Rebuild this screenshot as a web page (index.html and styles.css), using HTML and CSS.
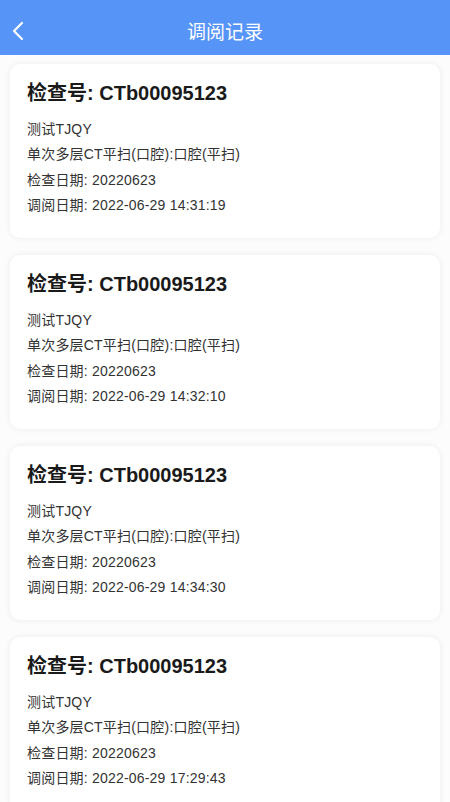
FILE: index.html
```html
<!DOCTYPE html>
<html lang="zh">
<head>
<meta charset="utf-8">
<link rel="stylesheet" href="styles.css">
</head>
<body>
<header class="nav">
  <svg class="back" width="14" height="20" viewBox="0 0 14 20"><path d="M11 2 L3 10 L11 18" fill="none" stroke="#fff" stroke-width="2.2" stroke-linecap="round" stroke-linejoin="round"/></svg>
  <div class="nav-title">调阅记录</div>
</header>
<main class="list">
  <section class="card">
    <h2 class="card-title">检查号: CTb00095123</h2>
    <p class="line">测试TJQY</p>
    <p class="line">单次多层CT平扫(口腔):口腔(平扫)</p>
    <p class="line">检查日期: 20220623</p>
    <p class="line">调阅日期: 2022-06-29 14:31:19</p>
  </section>
  <section class="card">
    <h2 class="card-title">检查号: CTb00095123</h2>
    <p class="line">测试TJQY</p>
    <p class="line">单次多层CT平扫(口腔):口腔(平扫)</p>
    <p class="line">检查日期: 20220623</p>
    <p class="line">调阅日期: 2022-06-29 14:32:10</p>
  </section>
  <section class="card">
    <h2 class="card-title">检查号: CTb00095123</h2>
    <p class="line">测试TJQY</p>
    <p class="line">单次多层CT平扫(口腔):口腔(平扫)</p>
    <p class="line">检查日期: 20220623</p>
    <p class="line">调阅日期: 2022-06-29 14:34:30</p>
  </section>
  <section class="card">
    <h2 class="card-title">检查号: CTb00095123</h2>
    <p class="line">测试TJQY</p>
    <p class="line">单次多层CT平扫(口腔):口腔(平扫)</p>
    <p class="line">检查日期: 20220623</p>
    <p class="line">调阅日期: 2022-06-29 17:29:43</p>
  </section>
</main>
</body>
</html>
```
FILE: styles.css
```css
html, body {
  margin: 0;
  padding: 0;
  background: #fcfcfd;
  font-family: "Liberation Sans", "Noto Sans CJK SC", sans-serif;
  overflow: hidden;
}
.nav {
  height: 55px;
  background: #5794f8;
  display: flex;
  align-items: center;
  justify-content: center;
  position: relative;
}
.back {
  position: absolute;
  left: 11px;
  top: 21px;
}
.nav-title {
  color: #fff;
  font-size: 19px;
  margin-top: 5px;
  font-family: "Noto Sans CJK SC", sans-serif;
}
.list {
  display: flex;
  flex-direction: column;
  gap: 17px;
  padding: 9px 10px 0;
}
.card {
  background: #fff;
  border-radius: 10px;
  box-shadow: 0 0 6px rgba(0, 0, 0, 0.07);
  padding: 16px 17px 20px;
  height: 174px;
  box-sizing: border-box;
}
.card-title {
  margin: 0 0 11px;
  font-size: 20px;
  line-height: 26px;
  font-weight: bold;
  color: #1a1a1a;
}
.line {
  margin: 0;
  font-size: 14px;
  letter-spacing: 0.2px;
  line-height: 25.3px;
  color: #333;
}
```
